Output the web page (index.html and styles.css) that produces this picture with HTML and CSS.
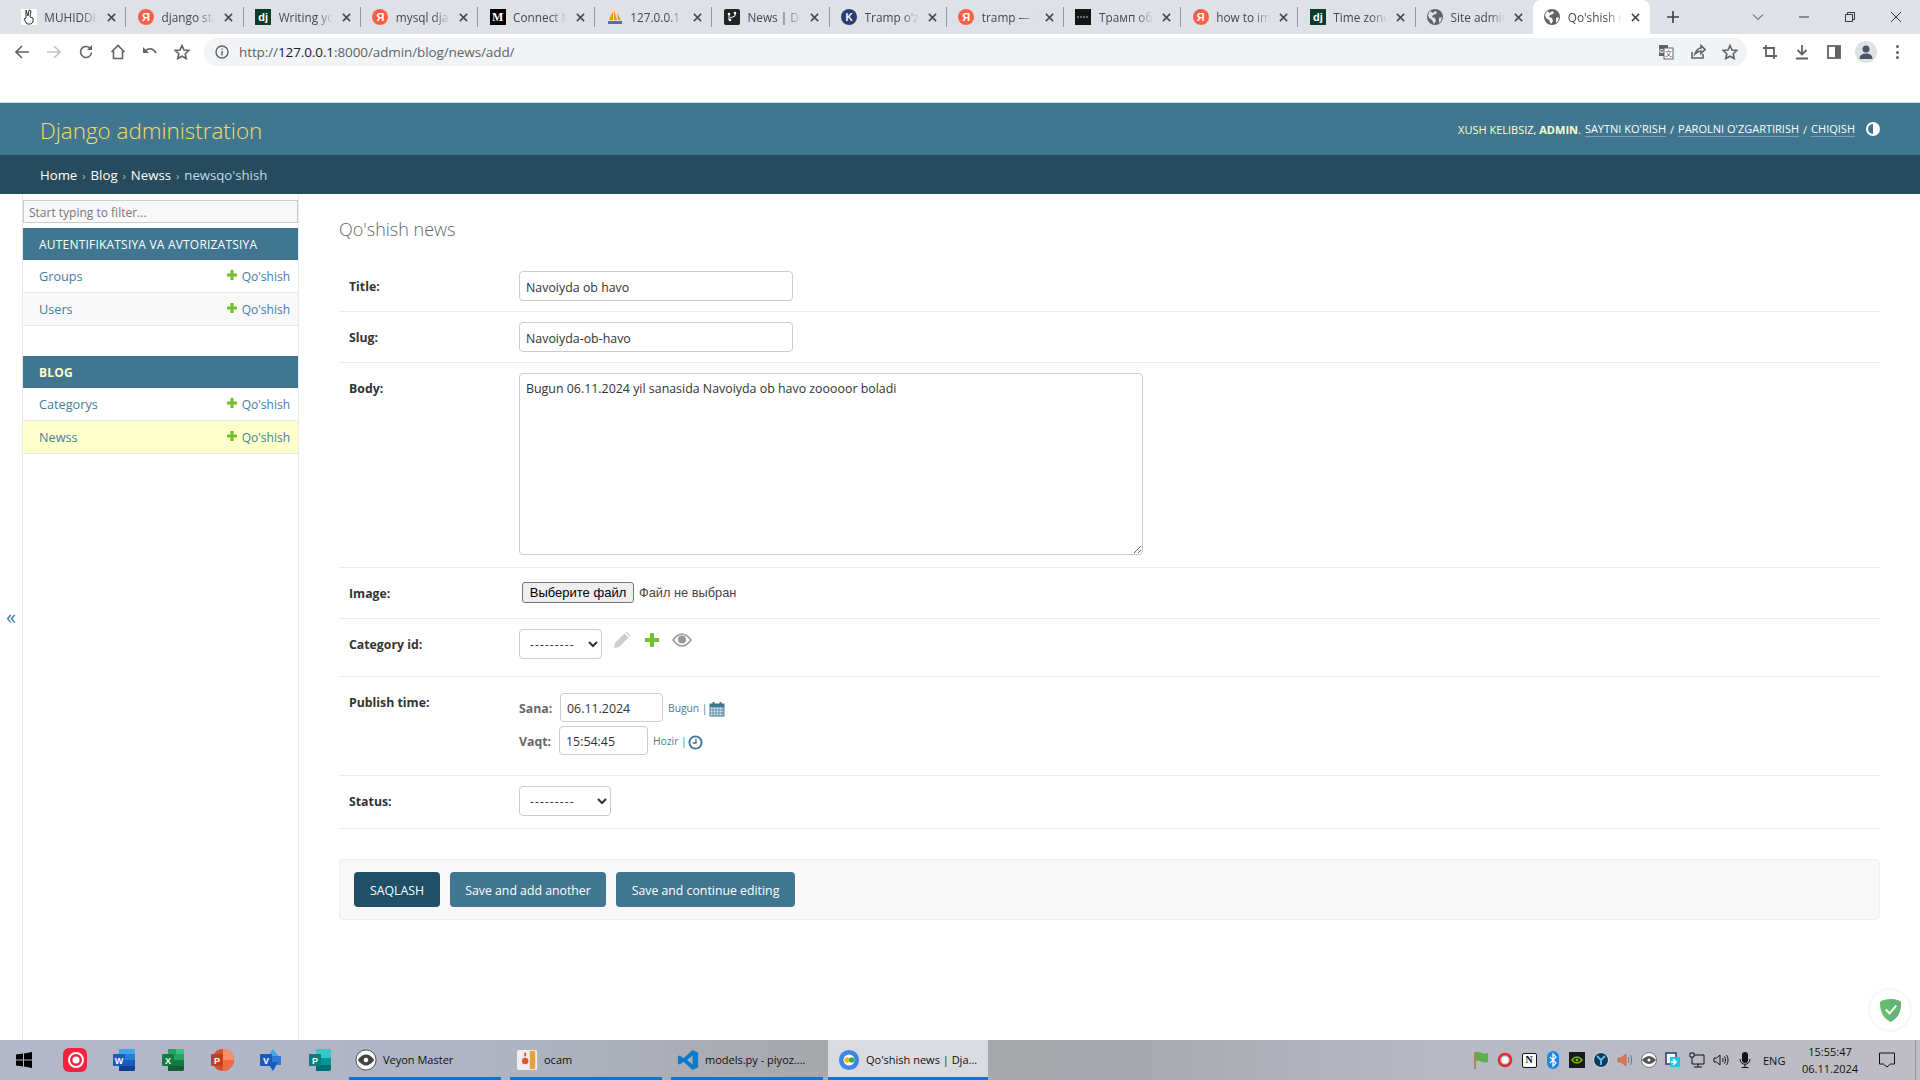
FILE: index.html
```html
<!DOCTYPE html>
<html lang="en">
<head>
<meta charset="utf-8">
<title>Qo'shish news | Django site admin</title>
<link rel="stylesheet" href="styles.css">
</head>
<body>
<div class="tabstrip">
  <div class="tab"><span class="fav fav-hand"><svg viewBox="0 0 16 16" width="16" height="16"><path d="M5 1l2 6 1-6 2 1-1 6 3 1v4l-2 2H6L3 10l2-1z" fill="#fff" stroke="#333" stroke-width="1"/></svg></span><span class="tab-title">MUHIDDIN</span><svg class="tab-x" viewBox="0 0 10 10"><path d="M1 1l8 8M9 1l-8 8"/></svg></div>
  <div class="tab"><span class="fav fav-ya">Я</span><span class="tab-title">django sta</span><svg class="tab-x" viewBox="0 0 10 10"><path d="M1 1l8 8M9 1l-8 8"/></svg></div>
  <div class="tab"><span class="fav fav-dj">dj</span><span class="tab-title">Writing yo</span><svg class="tab-x" viewBox="0 0 10 10"><path d="M1 1l8 8M9 1l-8 8"/></svg></div>
  <div class="tab"><span class="fav fav-ya">Я</span><span class="tab-title">mysql djan</span><svg class="tab-x" viewBox="0 0 10 10"><path d="M1 1l8 8M9 1l-8 8"/></svg></div>
  <div class="tab"><span class="fav fav-me">M</span><span class="tab-title">Connect M</span><svg class="tab-x" viewBox="0 0 10 10"><path d="M1 1l8 8M9 1l-8 8"/></svg></div>
  <div class="tab"><span class="fav"><svg viewBox="0 0 16 16" width="16" height="16"><path d="M2 11L6 2v9zM7 11V1l3 10zM10 4l4 7h-3z" fill="#f29111"/><rect x="1" y="12" width="14" height="3" fill="#5a6f9a"/></svg></span><span class="tab-title">127.0.0.1 /</span><svg class="tab-x" viewBox="0 0 10 10"><path d="M1 1l8 8M9 1l-8 8"/></svg></div>
  <div class="tab"><span class="fav"><svg viewBox="0 0 16 16" width="16" height="16"><rect width="16" height="16" rx="2" fill="#222"/><circle cx="5" cy="5" r="1.300" fill="#fff"/><circle cx="11" cy="4" r="1.300" fill="#fff"/><circle cx="6" cy="11" r="1.300" fill="#fff"/><path d="M5 5v6M11 4v3l-5 2" stroke="#fff" fill="none"/></svg></span><span class="tab-title">News | Dra</span><svg class="tab-x" viewBox="0 0 10 10"><path d="M1 1l8 8M9 1l-8 8"/></svg></div>
  <div class="tab"><span class="fav fav-k">K</span><span class="tab-title">Tramp o'zi</span><svg class="tab-x" viewBox="0 0 10 10"><path d="M1 1l8 8M9 1l-8 8"/></svg></div>
  <div class="tab"><span class="fav fav-ya">Я</span><span class="tab-title">tramp — Я</span><svg class="tab-x" viewBox="0 0 10 10"><path d="M1 1l8 8M9 1l-8 8"/></svg></div>
  <div class="tab"><span class="fav fav-black"><svg viewBox="0 0 16 16" width="16" height="16"><path d="M2 8h12" stroke="#888" stroke-width="1.500" stroke-dasharray="2 1"/></svg></span><span class="tab-title">Трамп об</span><svg class="tab-x" viewBox="0 0 10 10"><path d="M1 1l8 8M9 1l-8 8"/></svg></div>
  <div class="tab"><span class="fav fav-ya">Я</span><span class="tab-title">how to im</span><svg class="tab-x" viewBox="0 0 10 10"><path d="M1 1l8 8M9 1l-8 8"/></svg></div>
  <div class="tab"><span class="fav fav-dj">dj</span><span class="tab-title">Time zone</span><svg class="tab-x" viewBox="0 0 10 10"><path d="M1 1l8 8M9 1l-8 8"/></svg></div>
  <div class="tab tab-before-active"><span class="fav"><svg viewBox="0 0 16 16" width="16" height="16"><circle cx="8" cy="8" r="8" fill="#5f6368"/><path d="M3 2l3 2 2-2 2 1-1 2-3 1-1 2 3 1 1 3-2 3-2-4-3-2-1-3zM12 9l3-1-1 4-2 2z" fill="#dee1e6"/></svg></span><span class="tab-title">Site admin</span><svg class="tab-x" viewBox="0 0 10 10"><path d="M1 1l8 8M9 1l-8 8"/></svg></div>
  <div class="tab tab-active"><span class="fav"><svg viewBox="0 0 16 16" width="16" height="16"><circle cx="8" cy="8" r="8" fill="#5f6368"/><path d="M3 2l3 2 2-2 2 1-1 2-3 1-1 2 3 1 1 3-2 3-2-4-3-2-1-3zM12 9l3-1-1 4-2 2z" fill="#fff"/></svg></span><span class="tab-title">Qo'shish n</span><svg class="tab-x" viewBox="0 0 10 10"><path d="M1 1l8 8M9 1l-8 8"/></svg></div>
  <svg class="newtab" viewBox="0 0 12 12"><path d="M6 0v12M0 6h12"/></svg>
  <div class="winctl">
    <svg class="wc" viewBox="0 0 12 12"><path d="M1 3.500l5 5 5-5"/></svg>
    <svg class="wc" viewBox="0 0 12 12"><path d="M1 6h10"/></svg>
    <svg class="wc" viewBox="0 0 12 12"><path d="M1.500 3.500h7v7h-7zM3.500 3.500v-2h7v7h-2"/></svg>
    <svg class="wc" viewBox="0 0 12 12"><path d="M1 1l10 10M11 1L1 11"/></svg>
  </div>
</div>

<div class="toolbar">
  <div class="navicons">
    <svg class="ti" viewBox="0 0 16 16"><path d="M15 8H2M8 2L2 8l6 6"/></svg>
    <svg class="ti ti-off" viewBox="0 0 16 16"><path d="M1 8h13M8 2l6 6-6 6"/></svg>
    <svg class="ti" viewBox="0 0 16 16"><path d="M13.500 8.500A5.500 5.500 0 1 1 12 4.200"/><path class="solid" d="M14 1v5H9z"/></svg>
    <svg class="ti" viewBox="0 0 16 16"><path d="M1.500 8L8 1.500 14.500 8M3.500 7v7.500h9V7"/></svg>
    <svg class="ti" viewBox="0 0 16 16"><path d="M3 7c4-3.500 8-3 11 2"/><path class="solid" d="M1 3v6h6z"/></svg>
    <svg class="ti" viewBox="0 0 16 16"><path d="M8 1.500l2 4.500 4.800.5-3.600 3.200 1 4.800L8 12.200 3.800 14.500l1-4.800L1.200 6.500 6 6z"/></svg>
  </div>
  <div class="omnibox">
    <svg class="info" viewBox="0 0 14 14"><circle cx="7" cy="7" r="6"/><path d="M7 6v4.500M7 3.500v1.200"/></svg>
    <span class="url"><span class="url-dim">http://</span>127.0.0.1<span class="url-dim">:8000/admin/blog/news/add/</span></span>
    <div class="omni-right">
      <svg class="oi" viewBox="0 0 16 16"><rect x="1" y="1" width="9" height="11" fill="#5f6368"/><rect x="6" y="4" width="9" height="11" fill="#fff" stroke="#5f6368"/><rect x="1" y="1" width="5" height="11" fill="#5f6368"/><text x="3.500" y="8.500" class="oi-text">G</text><text x="10.500" y="12" class="oi-cjk">文</text></svg>
      <svg class="oi ti" viewBox="0 0 16 16"><path d="M2 8v6h11v-4M5 10c1-4 4-6 6-6V1.500l4 4-4 4V7c-2 0-4 1-6 3z"/></svg>
      <svg class="oi ti" viewBox="0 0 16 16"><path d="M8 1.500l2 4.500 4.800.5-3.600 3.200 1 4.800L8 12.200 3.800 14.500l1-4.800L1.200 6.500 6 6z"/></svg>
    </div>
  </div>
  <div class="exticons">
    <svg class="ti ti-bold" viewBox="0 0 16 16"><path d="M1 4h11v11M4 1v11h11"/></svg>
    <svg class="ti ti-bold" viewBox="0 0 16 16"><path d="M8 1v9M3.500 6L8 10.500 12.500 6M2 14.500h12"/></svg>
    <svg class="ti ti-bold" viewBox="0 0 16 16"><rect x="2" y="2" width="12" height="12"/><rect class="solid" x="9" y="2" width="5" height="12"/></svg>
    <span class="avatar"><svg viewBox="0 0 16 16" width="16" height="16"><circle cx="8" cy="5" r="3.500" fill="#4b5563"/><path d="M1.500 15c0-4 3-5.500 6.500-5.500s6.500 1.500 6.500 5.500z" fill="#4b5563"/></svg></span>
    <span class="dots"><i></i><i></i><i></i></span>
  </div>
</div>
<div class="page-gap"></div>

<header class="dj-header">
  <div class="branding">Django administration</div>
  <div class="usertools">
    <span>Xush kelibsiz, <strong>admin</strong>.</span>
    <a class="utlink">Saytni ko'rish</a><span>/</span><a class="utlink">Parolni o'zgartirish</a><span>/</span><a class="utlink">Chiqish</a>
    <span class="theme"></span>
  </div>
</header>
<nav class="crumbs"><a>Home</a> <span class="sep">›</span> <a>Blog</a> <span class="sep">›</span> <a>Newss</a> <span class="sep">›</span> <span class="crumb-current">newsqo'shish</span></nav>

<main class="admin-main">
  <div class="toggle">«</div>
  <aside class="sidebar">
    <div class="filter">Start typing to filter...</div>
    <div class="caption">Autentifikatsiya va avtorizatsiya</div>
    <div class="row"><a>Groups</a><span class="add"><svg class="plus" viewBox="0 0 12 12"><path d="M6 1v10M1 6h10"/></svg>Qo'shish</span></div>
    <div class="row row-alt"><a>Users</a><span class="add"><svg class="plus" viewBox="0 0 12 12"><path d="M6 1v10M1 6h10"/></svg>Qo'shish</span></div>
    <div class="caption caption-current">Blog</div>
    <div class="row"><a>Categorys</a><span class="add"><svg class="plus" viewBox="0 0 12 12"><path d="M6 1v10M1 6h10"/></svg>Qo'shish</span></div>
    <div class="row row-current"><a>Newss</a><span class="add"><svg class="plus" viewBox="0 0 12 12"><path d="M6 1v10M1 6h10"/></svg>Qo'shish</span></div>
  </aside>
  <section class="content">
    <h1 class="page-title">Qo'shish news</h1>
    <div class="form-row"><label class="lbl">Title:</label><input class="txt txt-wide" value="Navoiyda ob havo"></div>
    <div class="form-row"><label class="lbl">Slug:</label><input class="txt txt-wide" value="Navoiyda-ob-havo"></div>
    <div class="form-row"><label class="lbl">Body:</label><textarea class="area">Bugun 06.11.2024 yil sanasida Navoiyda ob havo zooooor boladi</textarea></div>
    <div class="form-row form-row-file"><label class="lbl">Image:</label><button class="filebtn">Выберите файл</button><span class="filetxt">Файл не выбран</span></div>
    <div class="form-row form-row-cat"><label class="lbl">Category id:</label>
      <select class="sel sel-cat"><option>---------</option></select>
      <span class="rel-icons">
        <svg class="rel" viewBox="0 0 18 18"><path d="M1 17l1-5L11.500 2.500l4 4L6 16z" fill="#ccc"/><path d="M12.500 1.500l1-1 4 4-1 1z" fill="#ccc"/></svg>
        <svg class="rel" viewBox="0 0 18 18"><path d="M9 2v14M2 9h14" stroke="#70bf2b" stroke-width="4" fill="none"/></svg>
        <svg class="rel rel-eye" viewBox="0 0 20 14"><path d="M1 7c3-4 6-6 9-6s6 2 9 6c-3 4-6 6-9 6S4 11 1 7z" fill="none" stroke="#999" stroke-width="1.500"/><circle cx="10" cy="6.500" r="4" fill="#999"/></svg>
      </span>
    </div>
    <div class="form-row"><label class="lbl">Publish time:</label>
      <div class="datetime">
        <div class="dt-line"><span class="dt-lbl dt-sana">Sana:</span><input class="txt dt-date" value="06.11.2024"><span class="dt-short">Bugun |</span><svg class="dt-ico" viewBox="0 0 16 16"><rect x="1" y="3" width="14" height="12" fill="#d7e6ee" stroke="#417690"/><path d="M1 6h14M1 9h14M1 12h14M4 6v9M7 6v9M10 6v9M13 6v9" stroke="#417690" stroke-width=".7"/><rect x="1" y="3" width="14" height="3" fill="#417690"/><path d="M4.500 1v3M11.500 1v3" stroke="#417690" stroke-width="2"/></svg></div>
        <div class="dt-line"><span class="dt-lbl dt-vaqt">Vaqt:</span><input class="txt dt-time" value="15:54:45"><span class="dt-short">Hozir |</span><svg class="dt-ico dt-clock" viewBox="0 0 16 16"><circle cx="8" cy="8" r="6.500" fill="none" stroke="#417690" stroke-width="2"/><path d="M8.500 4v4.500H5" fill="none" stroke="#417690" stroke-width="1.500"/></svg></div>
      </div>
    </div>
    <div class="form-row form-row-status"><label class="lbl">Status:</label><select class="sel sel-status"><option>---------</option></select></div>
    <div class="submit-row">
      <button class="btn btn-default">SAQLASH</button>
      <button class="btn btn-add">Save and add another</button>
      <button class="btn btn-cont">Save and continue editing</button>
    </div>
  </section>
  <div class="adguard"><svg viewBox="0 0 22 24" width="21" height="23"><path d="M11 0C7 0 3 1 0 3c0 9 2 16 11 21 9-5 11-12 11-21-3-2-7-3-11-3z" fill="#68bc71"/><path d="M11 0c4 0 8 1 11 3 0 9-2 16-11 21z" fill="#67b279"/><path d="M6 11l4 4 7-8" fill="none" stroke="#fff" stroke-width="2"/></svg></div>
</main>

<footer class="taskbar">
  <div class="slot slot-start"><svg viewBox="0 0 16 16" width="16" height="16"><path d="M0 2.500l7-1v6H0zM8 1.400l8-1.300V7.500H8zM0 8.500h7v6l-7-1zM8 8.500h8v7.400l-8-1.300z" fill="#000"/></svg></div>
  <div class="slot"><svg viewBox="0 0 24 24" width="24" height="24"><rect width="24" height="24" rx="6" fill="#f5223f"/><circle cx="13" cy="12" r="7" fill="none" stroke="#fff" stroke-width="2"/><circle cx="13" cy="12" r="3.500" fill="#fff"/></svg></div>
  <div class="slot"><svg viewBox="0 0 24 24" width="24" height="24"><path d="M7 1h14a2 2 0 0 1 2 2v18a2 2 0 0 1-2 2H7z" fill="#2b7cd3"/><rect x="7" y="12" width="16" height="6" fill="#185abd"/><path d="M7 18h16v3a2 2 0 0 1-2 2H7z" fill="#103f91"/><path d="M7 1h14a2 2 0 0 1 2 2v3H7z" fill="#41a5ee"/><rect x="1" y="6" width="12" height="12" rx="1" fill="#185abd"/><text x="7" y="15.500" class="of-text">W</text></svg></div>
  <div class="slot"><svg viewBox="0 0 24 24" width="24" height="24"><path d="M7 1h14a2 2 0 0 1 2 2v18a2 2 0 0 1-2 2H7z" fill="#21a366"/><rect x="7" y="12" width="16" height="6" fill="#107c41"/><path d="M7 18h16v3a2 2 0 0 1-2 2H7z" fill="#185c37"/><path d="M15 1h6a2 2 0 0 1 2 2v3h-8z" fill="#33c481"/><rect x="1" y="6" width="12" height="12" rx="1" fill="#107c41"/><text x="7" y="15.500" class="of-text">X</text></svg></div>
  <div class="slot"><svg viewBox="0 0 24 24" width="24" height="24"><circle cx="13" cy="12" r="11" fill="#d35230"/><path d="M13 1a11 11 0 0 1 11 11H13z" fill="#ff8f6b"/><path d="M13 12h11a11 11 0 0 1-11 11z" fill="#ed6c47"/><rect x="1" y="6" width="12" height="12" rx="1" fill="#c43e1c"/><text x="7" y="15.500" class="of-text">P</text></svg></div>
  <div class="slot"><svg viewBox="0 0 24 24" width="24" height="24"><path d="M14 1l6 8h-12z" fill="#41a5ee"/><rect x="11" y="8" width="11" height="9" fill="#2b7cd3"/><path d="M8 14h11l-5 9z" fill="#185abd"/><rect x="1" y="6" width="12" height="12" rx="1" fill="#185abd"/><text x="7" y="15.500" class="of-text">V</text></svg></div>
  <div class="slot"><svg viewBox="0 0 24 24" width="24" height="24"><path d="M8 1h13a2 2 0 0 1 2 2v7H8z" fill="#33c9c9"/><rect x="8" y="10" width="15" height="7" fill="#079494"/><path d="M8 17h15v4a2 2 0 0 1-2 2H8z" fill="#036c70"/><rect x="1" y="6" width="12" height="12" rx="1" fill="#077d7d"/><text x="7" y="15.500" class="of-text">P</text></svg></div>
  <div class="win win-first"><svg class="win-ico" viewBox="0 0 24 24"><circle cx="12" cy="12" r="11" fill="#fff" stroke="#444"/><path d="M3 12c3-4 6-6 9-6s6 2 9 6c-3 4-6 6-9 6s-6-2-9-6z" fill="#444"/><circle cx="12" cy="12" r="2.500" fill="#fff"/></svg><span>Veyon Master</span></div>
  <div class="win"><svg class="win-ico" viewBox="0 0 24 24"><rect x="1" y="1" width="22" height="22" rx="2" fill="#eee"/><rect x="15" y="2" width="6" height="20" fill="#e9a13b"/><circle cx="10" cy="13" r="3.500" fill="#e2552b"/><rect x="9" y="4" width="2" height="4" fill="#e2552b"/></svg><span>ocam</span></div>
  <div class="win"><svg class="win-ico" viewBox="0 0 24 24"><path d="M17 1l6 3v16l-6 3L7 14l-4 3-2-1V8l2-1 4 3zM17 7l-6 5 6 5z" fill="#0a7ccb"/></svg><span>models.py - piyoz....</span></div>
  <div class="win win-active"><svg class="win-ico" viewBox="0 0 24 24"><circle cx="12" cy="12" r="11" fill="#3f86e8"/><circle cx="12" cy="12" r="6" fill="#fff"/><circle cx="10" cy="12" r="3" fill="#f2b705"/><circle cx="15" cy="12" r="3" fill="#3bae5a"/></svg><span>Qo'shish news | Dja...</span></div>
  <div class="tray">
    <div class="tslot"><svg viewBox="0 0 16 20" width="16" height="20"><rect x="1" y="2" width="2" height="17" fill="#b8824a"/><path d="M3 2c4-1 5 3 12 1v9c-6 2-8-2-12-1z" fill="#5ab04a"/></svg></div>
    <div class="tslot"><svg viewBox="0 0 16 16" width="16" height="16"><circle cx="8" cy="8" r="7.500" fill="#bbb"/><circle cx="8" cy="8" r="6" fill="none" stroke="#e42a2a" stroke-width="2.500"/><circle cx="8" cy="8" r="3.500" fill="#fff"/></svg></div>
    <div class="tslot"><span class="notion">N</span></div>
    <div class="tslot"><span class="bt"><svg viewBox="0 0 10 16" width="10" height="16"><path d="M2 5l6 6-3 3V2l3 3-6 6" fill="none" stroke="#fff" stroke-width="1.200"/></svg></span></div>
    <div class="tslot"><svg viewBox="0 0 16 16" width="16" height="16"><rect width="16" height="16" fill="#1a1a1a"/><path d="M3 8c3-4 7-4 10 0-3 4-7 4-10 0z" fill="none" stroke="#76b900" stroke-width="1.500"/><circle cx="8" cy="8" r="1.500" fill="#76b900"/></svg></div>
    <div class="tslot"><svg viewBox="0 0 16 16" width="16" height="16"><circle cx="8" cy="8" r="7.500" fill="#0e3a5e" stroke="#ddd"/><path d="M4 4l4 4 4-4M8 8v5" fill="none" stroke="#5ec4ec" stroke-width="1.800"/></svg></div>
    <div class="tslot"><svg viewBox="0 0 16 16" width="16" height="16"><path d="M1 6h3l5-4v12l-5-4H1z" fill="#e8764a" stroke="#9a4a30" stroke-width=".5"/><path d="M11 5c1 2 1 4 0 6M13.500 3c1.500 3 1.500 7 0 10" fill="none" stroke="#777"/></svg></div>
    <div class="tslot"><svg viewBox="0 0 16 16" width="16" height="16"><circle cx="8" cy="8" r="7.500" fill="#fff" stroke="#777"/><path d="M1 8c3-3 5-4 7-4s4 1 7 4c-3 3-5 4-7 4S4 11 1 8z" fill="#555"/><circle cx="8" cy="8" r="1.500" fill="#fff"/></svg></div>
    <div class="tslot"><svg viewBox="0 0 16 16" width="16" height="16"><rect x="1" y="1" width="10" height="11" fill="#fff" stroke="#16417a" stroke-width="1.500"/><rect x="5" y="5" width="10" height="10" fill="#22c3e6"/><path d="M6 10h4M8 7l3 3-3 3" stroke="#fff" stroke-width="1.500" fill="none"/></svg></div>
    <div class="tslot"><svg class="tline" viewBox="0 0 16 16" width="16" height="16"><path d="M3 3h12v9H3zM9 12v3M5 15h8"/><path d="M1 1h4v4H1z" fill="#c8c8d0"/></svg></div>
    <div class="tslot"><svg class="tline" viewBox="0 0 16 16" width="16" height="16"><path d="M1 6h2.500L7 3v10L3.500 10H1zM9.500 6c.7 1.300.7 2.700 0 4M11.500 4.500c1.300 2.300 1.300 4.700 0 7M13.500 3c2 3 2 7 0 10"/></svg></div>
    <div class="tslot"><svg viewBox="0 0 16 18" width="16" height="18"><rect x="5" y="1" width="6" height="11" rx="3" fill="#111"/><path d="M3 8c0 7 10 7 10 0M8 13v3M4.500 16.500h7" fill="none" stroke="#111"/></svg></div>
    <div class="lang">ENG</div>
    <div class="clock"><span>15:55:47</span><span>06.11.2024</span></div>
    <div class="notif"><svg viewBox="0 0 18 18" width="18" height="18"><path d="M1.500 2h15v11h-4l-3.500 3-3.500-3h-4z" fill="none" stroke="#111"/></svg></div>
    <div class="showdesk"></div>
  </div>
</footer>
</body>
</html>
```
FILE: styles.css
```css
* { box-sizing: border-box; }
html, body { margin: 0; padding: 0; }
body {
  width: 1920px; height: 1080px; overflow: hidden;
  display: flex; flex-direction: column;
  background: #fff;
  font-family: "Open Sans", "Noto Sans", sans-serif;
  font-size: 12px; color: #333;
}

/* browser tabs */
.tabstrip { height: 34px; flex: none; background: #dee1e6; display: flex; align-items: stretch; padding-left: 9.3px; }
.tab { width: 117.2px; flex: none; display: flex; align-items: center; padding-left: 11.500px; }
.tab::after { content: ""; width: 1px; height: 20px; margin-left: auto; background: #94979c; }
.tab-before-active::after, .tab-active::after { background: transparent; }
.tab-active { background: #fff; border-radius: 8px 8px 0 0; }
.fav { width: 16px; height: 16px; flex: none; display: flex; align-items: center; justify-content: center; font-family: "Liberation Sans", sans-serif; }
.fav-hand { background: #fff; }
.fav-ya { background: #fc5f43; color: #fff; border-radius: 50%; font-size: 11px; font-weight: 700; }
.fav-dj { background: #0c3c26; color: #fff; font-size: 11px; font-weight: 700; }
.fav-me { background: #000; color: #fff; font-size: 12px; font-weight: 700; font-family: "Liberation Serif", serif; }
.fav-k { background: #2a3d72; color: #fff; border-radius: 50%; font-size: 10px; font-weight: 700; }
.fav-black { background: #151515; }
.tab-title {
  width: 54px; margin-left: 7.500px; overflow: hidden; white-space: nowrap;
  font-size: 11.800px; color: #45494e; line-height: 16px; margin-top: -1px;
  -webkit-mask-image: linear-gradient(90deg, #000 70%, transparent 100%);
  mask-image: linear-gradient(90deg, #000 70%, transparent 100%);
}
.tab-x { width: 9px; height: 9px; margin-left: 9px; flex: none; fill: none; stroke: #45494e; stroke-width: 1.700; }
.newtab { width: 12px; height: 12px; flex: none; align-self: center; margin-left: 17px; fill: none; stroke: #3c4043; stroke-width: 1.600; }
.winctl { margin-left: auto; display: flex; align-self: flex-start; padding-right: 1px; }
.wc { width: 12px; height: 12px; margin: 11px 17px 0; fill: none; stroke: #222; stroke-width: .9; }

/* browser toolbar */
.toolbar { height: 34px; flex: none; background: #fff; display: flex; align-items: center; padding-top: 2px; }
.navicons { display: flex; align-items: center; width: 204px; padding-left: 14px; gap: 16px; flex: none; }
.ti { width: 16px; height: 16px; flex: none; fill: none; stroke: #5f6368; stroke-width: 1.600; }
.ti .solid { fill: #5f6368; stroke: none; }
.ti-off { stroke: #bdc1c6; }
.ti-bold { stroke-width: 1.800; }
.omnibox { width: 1543px; height: 28px; flex: none; background: #f1f3f4; border-radius: 14px; display: flex; align-items: center; padding-left: 11px; }
.info { width: 14px; height: 14px; flex: none; fill: none; stroke: #5f6368; stroke-width: 1.400; }
.url { margin-left: 10px; font-size: 13.500px; color: #202124; letter-spacing: -.1px; }
.url-dim { color: #5f6368; }
.omni-right { margin-left: auto; display: flex; align-items: center; gap: 16px; padding-right: 9px; }
.oi { width: 16px; height: 16px; flex: none; }
.oi-text { font-family: "Liberation Sans", sans-serif; font-size: 6px; font-weight: 700; fill: #fff; text-anchor: middle; }
.oi-cjk { font-family: "Noto Sans CJK SC", sans-serif; font-size: 7px; fill: #5f6368; text-anchor: middle; }
.exticons { flex: 1; display: flex; align-items: center; padding-left: 15px; gap: 16px; }
.avatar { width: 22px; height: 22px; border-radius: 50%; background: #dee1e6; display: flex; align-items: center; justify-content: center; margin-left: -3px; overflow: hidden; flex: none; }
.dots { display: flex; flex-direction: column; gap: 2.500px; margin-left: 3px; }
.dots i { width: 3px; height: 3px; border-radius: 50%; background: #5f6368; display: block; }
.page-gap { height: 35px; flex: none; border-bottom: 1px solid #dcdcdc; }

/* django header */
.dj-header { height: 52px; flex: none; background: #417690; display: flex; align-items: center; justify-content: space-between; padding: 0 40px; }
.branding { font-size: 22.400px; font-weight: 300; color: #f5dd5d; padding-top: 2px; }
.usertools { display: flex; align-items: center; gap: 4px; font-size: 11px; text-transform: uppercase; color: #ffc; }
.utlink { color: #fff; border-bottom: 1px solid rgba(255,255,255,.3); }
.theme { width: 14px; height: 14px; border-radius: 50%; border: 2px solid #fff; background: linear-gradient(90deg, #417690 50%, #fff 50%); margin-left: 7px; }
.crumbs { height: 39px; flex: none; background: #264b5d; display: flex; align-items: center; gap: 5px; padding: 1px 40px 0; font-size: 13.200px; color: #c4dce8; }
.crumbs a { color: #fff; }
.sep { color: #a8c4d2; font-size: 11px; }

/* layout */
.admin-main { flex: 1; min-height: 0; display: flex; position: relative; }
.toggle { width: 23px; flex: none; border-right: 1px solid #eaeaea; display: flex; align-items: center; justify-content: center; padding: 0 0 2px; color: #447e9b; font-size: 20px; }
.sidebar { width: 276px; flex: none; border-right: 1px solid #eaeaea; padding-top: 6px; }
.filter { height: 23px; margin-bottom: 5px; background: #f8f8f8; border: 1px solid #ccc; padding-left: 5px; line-height: 23px; color: #777; font-size: 12px; }
.caption { height: 32px; background: #417690; color: #fff; padding-left: 16px; line-height: 33px; font-size: 12px; letter-spacing: .2px; text-transform: uppercase; font-weight: 500; }
.caption-current { margin-top: 30px; font-weight: 700; color: #ffc; }
.row { height: 33px; border-bottom: 1px solid #e8e8e8; display: flex; align-items: center; justify-content: space-between; padding: 0 8px 0 16px; color: #447e9b; }
.row a { font-size: 12.700px; }
.row-alt { background: #f8f8f8; }
.row-current { background: #ffc; }
.add { display: flex; align-items: center; }
.plus { width: 12px; height: 12px; margin-right: 4px; margin-top: -3px; fill: none; stroke: #70bf2b; stroke-width: 3; }

/* content */
.content { flex: 1; min-width: 0; padding: 0 40px; }
.page-title { margin: 0; height: 67px; padding-top: 22px; font-size: 18px; font-weight: 300; color: #666; line-height: 26px; }
.form-row { display: flex; align-items: flex-start; padding: 10px; border-bottom: 1px solid #eaeaea; }
.form-row-file { align-items: center; height: 51px; }
.form-row-file .lbl { align-self: flex-start; }
.form-row-cat { height: 58px; }
.form-row-status { height: 53px; }
.lbl { width: 170px; flex: none; height: 30px; line-height: 32px; font-weight: 700; color: #333; font-size: 12.300px; }
.txt { height: 30px; padding: 2px 6px 0; border: 1px solid #ccc; border-radius: 4px; font: 12.400px "Open Sans", sans-serif; color: #333; background: #fff; outline: none; }
.txt-wide { width: 274px; }
.area { width: 624px; height: 182px; margin-bottom: 2px; padding: 7px 6px 5px; border: 1px solid #ccc; border-radius: 4px; font: 12.400px/16px "Open Sans", sans-serif; color: #333; resize: both; outline: none; }
.filebtn { margin: -1px 0 0 3px; width: 112px; height: 21px; padding: 0; border: 1px solid #767676; border-radius: 3px; background: #efefef; font: 13px "Liberation Sans", sans-serif; color: #000; }
.filetxt { margin: -1px 0 0 5px; font: 12.800px "Liberation Sans", sans-serif; color: #444; }
.sel { height: 30px; padding: 0 0 0 6px; border: 1px solid #ccc; border-radius: 4px; background: #fff; font: 12px "Open Sans", sans-serif; letter-spacing: 1.100px; color: #333; outline: none; }
.sel-cat { width: 83px; }
.sel-status { width: 92px; }
.rel-icons { display: flex; align-items: center; height: 22px; margin-left: 11px; gap: 12px; }
.rel { width: 18px; height: 18px; flex: none; }
.rel-eye { width: 20px; height: 14px; margin-left: -1px; }
.datetime { padding: 6px 0 10px; display: flex; flex-direction: column; gap: 4px; }
.dt-line { display: flex; align-items: center; }
.dt-lbl { font-weight: 700; color: #666; font-size: 12.300px; padding-top: 1px; }
.dt-sana { width: 41px; }
.dt-vaqt { width: 40px; }
.dt-date { width: 103px; height: 29px; }
.dt-time { width: 89px; height: 29px; }
.dt-short { margin-left: 5px; margin-right: 1px; font-size: 10.300px; color: #447e9b; white-space: pre; }
.dt-ico { width: 16px; height: 16px; flex: none; margin-top: 2px; }
.dt-clock { width: 15px; height: 15px; margin-top: 3px; }
.submit-row { margin-top: 30px; height: 61px; padding: 12px 14px; display: flex; gap: 10px; background: #f8f8f8; border: 1px solid #eee; border-radius: 4px; }
.btn { height: 35px; padding: 2px 0 0; border: 0; border-radius: 4px; background: #417690; color: #fff; font: 12.300px "Open Sans", sans-serif; }
.btn-default { width: 86px; background: #205067; }
.btn-add { width: 156px; }
.btn-cont { width: 179px; }
.adguard { position: absolute; left: 1870px; top: 796px; width: 40px; height: 40px; border-radius: 50%; background: #fff; box-shadow: 0 0 4px rgba(0,0,0,.1); display: flex; align-items: center; justify-content: center; }

/* taskbar */
.taskbar { height: 40px; flex: none; display: flex; align-items: center; background: linear-gradient(90deg, #b3b9c8 0%, #aeb4c3 25%, #a6a7aa 45%, #a8aab0 60%, #b6bac6 75%, #bfbcc4 100%); font-size: 11px; color: #111; }
.slot { width: 49px; height: 40px; flex: none; display: flex; align-items: center; justify-content: center; }
.slot-start { width: 50px; padding-right: 2px; }
.of-text { font-family: "Liberation Sans", sans-serif; font-size: 9px; font-weight: 700; fill: #fff; text-anchor: middle; }
.win { width: 152px; height: 40px; flex: none; margin-left: 9px; padding-left: 6px; display: flex; align-items: center; gap: 6px; border-bottom: 3px solid #0078d7; white-space: nowrap; }
.win span { padding-top: 1px; }
.win-first { margin-left: 5px; }
.win-ico { width: 22px; height: 22px; flex: none; margin-top: 2px; }
.win-active { width: 160px; margin-left: 5px; padding-left: 10px; gap: 6px; background: #d9dbe0; }
.tray { margin-left: auto; display: flex; align-items: center; height: 40px; }
.tslot { width: 24px; flex: none; display: flex; align-items: center; justify-content: center; }
.tline { fill: none; stroke: #111; stroke-width: 1; }
.notion { width: 15px; height: 15px; border: 1.500px solid #111; border-radius: 2px; background: #fff; color: #111; font: 700 10px/12px "Liberation Serif", serif; text-align: center; }
.bt { width: 12px; height: 18px; border-radius: 6px; background: #1a86f0; display: flex; align-items: center; justify-content: center; }
.lang { width: 30px; margin-left: 6px; font-size: 11px; }
.clock { width: 66px; margin-left: 4px; display: flex; flex-direction: column; align-items: center; line-height: 17px; font-size: 11px; }
.notif { width: 36px; margin-left: 6px; display: flex; justify-content: center; }
.showdesk { width: 5px; height: 40px; margin-left: 10px; border-left: 1px solid #9a9a9f; }
```
